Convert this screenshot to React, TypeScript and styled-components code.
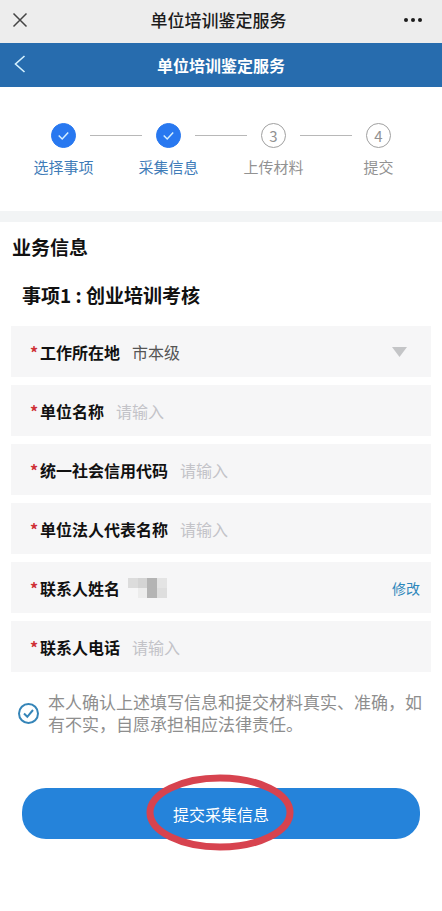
import React, { useState } from "react";
import styled, { createGlobalStyle } from "styled-components";

const GlobalStyle = createGlobalStyle`
  *, *::before, *::after { box-sizing: border-box; }
  body {
    margin: 0;
    background: #fff;
    color: #111;
    font-family: "Noto Sans CJK SC", "Noto Sans", sans-serif;
    font-size: 16px;
    line-height: 24px;
  }
  button, input, select { font: inherit; color: inherit; }
`;

const Page = styled.div`
  display: flex;
  flex-direction: column;
`;

const Bar = styled.header<{ $tone: "light" | "blue" }>`
  display: grid;
  grid-template-columns: 48px 1fr 48px;
  align-items: center;
  padding: ${(p) => (p.$tone === "blue" ? "0 4px" : "0 9px 4px 4px")};
  height: ${(p) => (p.$tone === "blue" ? 44 : 43)}px;
  background: ${(p) => (p.$tone === "blue" ? "#276cae" : "#ededed")};
  color: ${(p) => (p.$tone === "blue" ? "#fff" : "#1c1c1c")};
`;

const BarTitle = styled.h1<{ $strong?: boolean }>`
  margin: 0;
  text-align: center;
  font-size: ${(p) => (p.$strong ? 16 : 17)}px;
  font-weight: ${(p) => (p.$strong ? 700 : 500)};
`;

const IconButton = styled.button`
  display: flex;
  align-items: center;
  justify-content: center;
  width: 32px;
  height: 32px;
  padding: 0;
  border: 0;
  background: none;
  cursor: pointer;
  &:last-child { justify-self: end; margin-right: 4px; }
`;

const Steps = styled.ol`
  display: grid;
  grid-template-columns: repeat(4, 1fr);
  margin: 0;
  padding: 36px 11px 32px;
  list-style: none;
  border-bottom: 11px solid #f2f4f5;
`;

const StepItem = styled.li<{ $done: boolean }>`
  display: flex;
  flex-direction: column;
  gap: 7px;
  text-align: center;
  font-size: 15px;
  color: ${(p) => (p.$done ? "#3f7cb8" : "#929292")};
`;

const Track = styled.div`
  display: grid;
  grid-template-columns: 1fr 25px 1fr;
  align-items: center;
`;

const Connector = styled.span<{ $side: "left" | "right"; $hidden: boolean }>`
  height: 1px;
  margin: ${(p) => (p.$side === "left" ? "0 14px 0 0" : "0 0 0 14px")};
  background: ${(p) => (p.$hidden ? "transparent" : "#b8b8b8")};
`;

const Dot = styled.span<{ $done: boolean }>`
  display: flex;
  align-items: center;
  justify-content: center;
  height: 25px;
  border-radius: 50%;
  border: 1px solid ${(p) => (p.$done ? "#2878f0" : "#a0a0a0")};
  background: ${(p) => (p.$done ? "#2878f0" : "#fff")};
`;

const DoneDot = styled(Dot)`
  color: #d5efff;
`;

const Form = styled.form`
  display: flex;
  flex-direction: column;
  padding: 11px 11px 24px;
`;

const SectionTitle = styled.h2`
  margin: 0;
  padding-left: 1px;
  font-size: 19px;
  line-height: 28px;
`;

const ItemTitle = styled.h3`
  margin: 20px 0 17px;
  padding-left: 11px;
  font-size: 19px;
  line-height: 28px;
`;

const Fields = styled.div`
  display: flex;
  flex-direction: column;
  gap: 8px;
`;

const Row = styled.div`
  display: flex;
  align-items: center;
  height: 51px;
  padding: 0 11px 0 19px;
  background: #f6f6f7;
`;

const Label = styled.label`
  flex: none;
  display: flex;
  gap: 3px;
  margin-right: 12px;
  font-weight: 700;
`;

const Star = styled.span`
  width: 7px;
  color: #cf3036;
`;

const TextInput = styled.input`
  flex: 1;
  min-width: 0;
  padding: 0;
  border: 0;
  outline: 0;
  background: transparent;
  &::placeholder { color: #c3c3c8; opacity: 1; }
`;

const SelectWrap = styled.div`
  flex: 1;
  display: grid;
  align-items: center;
  color: #555;
  & > * { grid-area: 1 / 1; }
  svg { justify-self: end; margin-right: 13px; pointer-events: none; }
`;

const Select = styled.select`
  appearance: none;
  width: 100%;
  padding: 0;
  border: 0;
  outline: 0;
  background: transparent;
`;

const Masked = styled.span`
  flex: 1;
  display: flex;
  margin-left: -4px;
`;

const EditButton = styled.button`
  padding: 0;
  border: 0;
  background: none;
  color: #2d87bb;
  font-size: 14px;
  cursor: pointer;
`;

const Consent = styled.label`
  display: flex;
  align-items: center;
  gap: 9px;
  margin: 19px 0 53px;
  padding-left: 7px;
  font-size: 17px;
  line-height: 22px;
  color: #8e8e8e;
`;

const ConsentText = styled.span`
  flex: 1;
  margin-right: -4px;
`;

const CheckWrap = styled.span`
  flex: none;
  display: grid;
  width: 21px;
  height: 21px;
  & > * { grid-area: 1 / 1; }
  svg { pointer-events: none; }
`;

const Checkbox = styled.input`
  appearance: none;
  width: 21px;
  height: 21px;
  margin: 0;
  border: 2px solid #3585b8;
  border-radius: 50%;
`;

const Submit = styled.button`
  position: relative;
  height: 51px;
  margin: 0 11px;
  padding: 0;
  border: 0;
  border-radius: 24px;
  background: #2583da;
  color: #fff;
  cursor: pointer;
`;

const Marker = styled.svg`
  position: absolute;
  top: -14px;
  left: calc(50% - 75px);
  pointer-events: none;
`;

const Tick = ({ size, width }: { size: number; width: number }) => (
  <svg width={size} height={size} viewBox="0 0 21 21" fill="none" stroke="currentColor" strokeWidth={width}>
    <path d="M5.7 10.5 9.2 14 15.2 7.6" />
  </svg>
);

const steps = ["选择事项", "采集信息", "上传材料", "提交"];
const currentStep = 2;

const Stepper = () => (
  <Steps>
    {steps.map((name, i) => {
      const done = i < currentStep;
      return (
        <StepItem key={name} $done={done}>
          <Track>
            <Connector $side="left" $hidden={i === 0} />
            {done ? (
              <DoneDot $done>
                <Tick size={21} width={1.5} />
              </DoneDot>
            ) : (
              <Dot $done={false}>{i + 1}</Dot>
            )}
            <Connector $side="right" $hidden={i === steps.length - 1} />
          </Track>
          <span>{name}</span>
        </StepItem>
      );
    })}
  </Steps>
);

const FieldLabel = ({ id, text }: { id?: string; text: string }) => (
  <Label as={id ? "label" : "div"} htmlFor={id}>
    <Star>*</Star>
    {text}
  </Label>
);

const TextRow = ({ id, text }: { id: string; text: string }) => (
  <Row>
    <FieldLabel id={id} text={text} />
    <TextInput id={id} placeholder="请输入" />
  </Row>
);

export default function App() {
  const [agreed, setAgreed] = useState(true);
  return (
    <Page>
      <GlobalStyle />
      <Bar $tone="light">
        <IconButton aria-label="关闭">
          <svg width="16" height="16" viewBox="0 0 16 16" stroke="#444" strokeWidth="1.5">
            <path d="M1.5 1.5 14.5 14.5M14.5 1.5 1.5 14.5" />
          </svg>
        </IconButton>
        <BarTitle>单位培训鉴定服务</BarTitle>
        <IconButton aria-label="更多">
          <svg width="20" height="6" viewBox="0 0 20 6" fill="#1c1c1c">
            <circle cx="3" cy="3" r="2" />
            <circle cx="10" cy="3" r="2" />
            <circle cx="17" cy="3" r="2" />
          </svg>
        </IconButton>
      </Bar>
      <Bar $tone="blue" as="div">
        <IconButton aria-label="返回">
          <svg width="14" height="20" viewBox="0 0 14 20" fill="none" stroke="#d5f2ff" strokeWidth="1.6">
            <path d="M11.5 1 2.5 9 11.5 17" />
          </svg>
        </IconButton>
        <BarTitle as="h2" $strong>单位培训鉴定服务</BarTitle>
      </Bar>
      <Stepper />
      <Form onSubmit={(e: React.FormEvent) => e.preventDefault()}>
        <SectionTitle>业务信息</SectionTitle>
        <ItemTitle>事项1 : 创业培训考核</ItemTitle>
        <Fields>
          <Row>
            <FieldLabel id="place" text="工作所在地" />
            <SelectWrap>
              <Select id="place">
                <option>市本级</option>
              </Select>
              <svg width="15" height="10" viewBox="0 0 15 10">
                <path d="M0 0H15L7.5 10Z" fill="#c4c5c7" />
              </svg>
            </SelectWrap>
          </Row>
          <TextRow id="company" text="单位名称" />
          <TextRow id="code" text="统一社会信用代码" />
          <TextRow id="legal" text="单位法人代表名称" />
          <Row>
            <FieldLabel text="联系人姓名" />
            <Masked>
              <svg width="39" height="20" viewBox="0 0 39 20" shapeRendering="crispEdges">
                <rect width="10" height="10" fill="#dcdcdc" />
                <rect x="10" width="9" height="10" fill="#d4d4d4" />
                <rect x="10" y="10" width="9" height="10" fill="#ececec" />
                <rect x="19" width="10" height="20" fill="#b4b4b4" />
                <rect x="29" width="10" height="10" fill="#e4e4e4" />
                <rect x="29" y="10" width="10" height="10" fill="#dedede" />
              </svg>
            </Masked>
            <EditButton type="button">修改</EditButton>
          </Row>
          <TextRow id="phone" text="联系人电话" />
        </Fields>
        <Consent>
          <CheckWrap>
            <Checkbox type="checkbox" checked={agreed} onChange={(e) => setAgreed(e.target.checked)} />
            {agreed && (
              <svg width="21" height="21" viewBox="0 0 21 21" fill="none" stroke="#3585b8" strokeWidth="2">
                <path d="M6 10.5 9.3 13.8 15 7" />
              </svg>
            )}
          </CheckWrap>
          <ConsentText>
            本人确认上述填写信息和提交材料真实、准确，如有不实，自愿承担相应法律责任。
          </ConsentText>
        </Consent>
        <Submit type="submit">
          提交采集信息
          <Marker width="148" height="77" viewBox="0 0 148 77" fill="none">
            <ellipse cx="74" cy="38.5" rx="70" ry="34.5" stroke="#d7434f" strokeWidth="7" />
          </Marker>
        </Submit>
      </Form>
    </Page>
  );
}
